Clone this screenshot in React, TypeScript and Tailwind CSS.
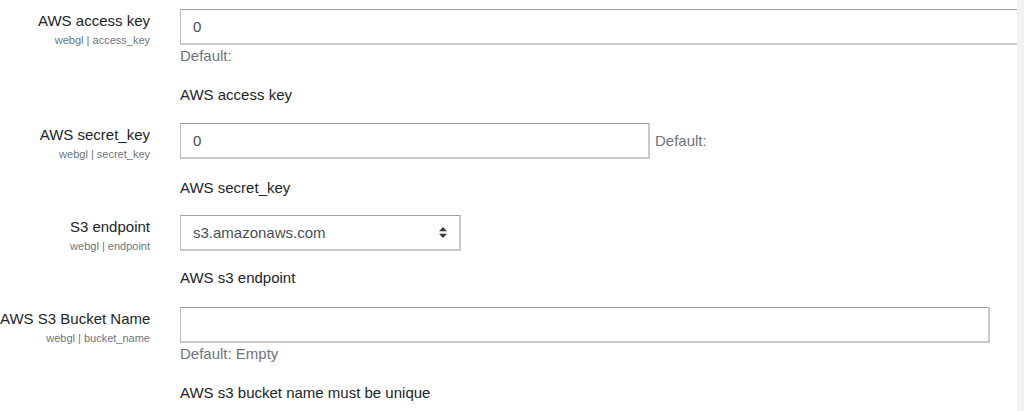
import React from "react";

const inputBase =
  "h-[36px] bg-white border border-[#b8bcc0] border-t-[#a0a0a0] border-b-2 border-r-2 border-b-[#c6cacd] border-r-[#c6cacd] px-[12px] text-[15px] leading-[22px] text-[#495057] flex items-center";

function Label({ title, sub }: { title: string; sub: string }) {
  return (
    <div className="w-[150px] shrink-0 text-right pt-[1px]">
      <div className="text-[15px] leading-[22px] text-[#212529] whitespace-nowrap">{title}</div>
      <div className="text-[11px] leading-[16px] text-[#6c757d] whitespace-nowrap">{sub}</div>
    </div>
  );
}

function SortArrows() {
  return (
    <svg width="8" height="11" viewBox="0 0 8 11" className="shrink-0">
      <path d="M4 0 L8 4.2 L0 4.2 Z" fill="#343a40" />
      <path d="M4 11 L8 6.8 L0 6.8 Z" fill="#343a40" />
    </svg>
  );
}

export default function App() {
  return (
    <div
      className="w-[1024px] h-[411px] flex bg-white overflow-hidden"
      style={{ fontFamily: '"Liberation Sans", Arial, sans-serif' }}
    >
      <div className="flex-1 overflow-hidden pt-[9px]">
        {/* Block 1 */}
        <div className="flex gap-[30px]">
          <Label title="AWS access key" sub="webgl | access_key" />
          <div className="flex flex-col">
            <div className={`${inputBase} w-[860px]`}>0</div>
            <div className="text-[15px] leading-[22px] text-[#6c757d]">Default:</div>
            <div className="mt-[17px] text-[15px] leading-[22px] text-[#212529]">AWS access key</div>
          </div>
        </div>

        {/* Block 2 */}
        <div className="flex gap-[30px] mt-[17px]">
          <Label title="AWS secret_key" sub="webgl | secret_key" />
          <div className="flex flex-col">
            <div className="flex items-center">
              <div className={`${inputBase} w-[470px]`}>0</div>
              <div className="ml-[5px] text-[15px] leading-[22px] text-[#6c757d]">Default:</div>
            </div>
            <div className="mt-[18px] text-[15px] leading-[22px] text-[#212529]">AWS secret_key</div>
          </div>
        </div>

        {/* Block 3 */}
        <div className="flex gap-[30px] mt-[16px]">
          <Label title="S3 endpoint" sub="webgl | endpoint" />
          <div className="flex flex-col">
            <div className={`${inputBase} w-[281px] justify-between pr-[12px] border-b-[#9a9a9a]`}>
              <span className="text-[#495057]">s3.amazonaws.com</span>
              <SortArrows />
            </div>
            <div className="mt-[16px] text-[15px] leading-[22px] text-[#212529]">AWS s3 endpoint</div>
          </div>
        </div>

        {/* Block 4 */}
        <div className="flex gap-[30px] mt-[18px]">
          <Label title="AWS S3 Bucket Name" sub="webgl | bucket_name" />
          <div className="flex flex-col">
            <div className={`${inputBase} w-[810px]`}></div>
            <div className="text-[15px] leading-[22px] text-[#6c757d]">Default: Empty</div>
            <div className="mt-[17px] text-[15px] leading-[22px] text-[#212529]">
              AWS s3 bucket name must be unique
            </div>
          </div>
        </div>
      </div>
      <div className="w-[7px] shrink-0 bg-[#f1f1f1]" />
    </div>
  );
}
